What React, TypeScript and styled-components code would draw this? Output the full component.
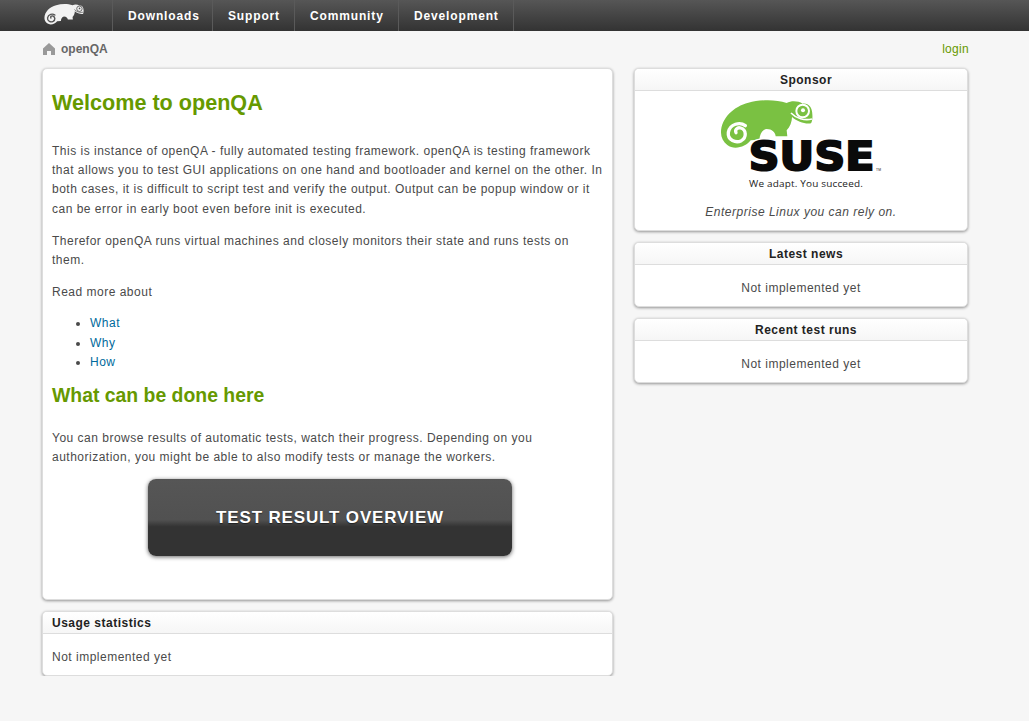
import React from 'react';
import styled, { createGlobalStyle } from 'styled-components';

const GlobalStyle = createGlobalStyle`
  html, body {
    margin: 0;
    padding: 0;
    background: #f6f6f6;
  }
  body {
    font-family: "Liberation Sans", Arial, sans-serif;
    font-size: 12px;
    line-height: 19.2px;
    letter-spacing: 0.5px;
    color: #4a4a4a;
  }
`;

const TopBar = styled.header`
  display: flex;
  height: 31px;
  background: linear-gradient(#565656, #333);
`;

const LogoSlot = styled.div`
  width: 112px;
  box-sizing: border-box;
  padding: 3px 0 0 44px;
`;

const NavItem = styled.a<{ $width: number }>`
  display: flex;
  align-items: center;
  width: ${p => p.$width}px;
  height: 31px;
  box-sizing: border-box;
  padding: 2px 0 0 15px;
  border-left: 1px solid #5a5a5a;
  color: #fff;
  font-weight: bold;
  letter-spacing: 0.85px;
  font-size: 12px;
  &:last-child {
    border-right: 1px solid #5a5a5a;
  }
`;

const Crumbs = styled.div`
  display: flex;
  justify-content: space-between;
  align-items: center;
  height: 37px;
  padding: 0 60px 0 43px;
`;

const CrumbHome = styled.div`
  display: flex;
  align-items: center;
  gap: 6px;
  color: #666;
  font-weight: bold;
  letter-spacing: 0;
`;

const Login = styled.a`
  color: #690;
  letter-spacing: 0.3px;
`;

const Columns = styled.div`
  display: grid;
  grid-template-columns: 571px 334px;
  column-gap: 21px;
  padding: 0 0 0 42px;
  align-items: start;
`;

const Column = styled.div`
  display: flex;
  flex-direction: column;
  gap: 11px;
`;

const Box = styled.section`
  background: #fff;
  border: 1px solid #ddd;
  border-radius: 5px;
  box-shadow: 0 1px 3px rgba(0, 0, 0, 0.4);
  overflow: hidden;
`;

const BoxHeader = styled.h3<{ $left?: boolean }>`
  margin: 0;
  height: 21px;
  line-height: 22px;
  padding: ${p => (p.$left ? '0 9px' : '0 0 0 10px')};
  background: linear-gradient(#fff, #f6f6f6);
  border-bottom: 1px solid #ddd;
  color: #222;
  font-size: 12px;
  font-weight: bold;
  text-align: ${p => (p.$left ? 'left' : 'center')};
`;

const BoxBody = styled.div<{ $left?: boolean }>`
  padding: 14px 9px 8px;
  line-height: 19px;
  text-align: ${p => (p.$left ? 'left' : 'center')};
`;

const MainContent = styled.div`
  padding: 19px 9px 42.75px 9px;
`;

const Title = styled.h1`
  margin: 0 0 24px;
  color: #690;
  font-size: 21.6px;
  line-height: 30px;
  letter-spacing: 0;
`;

const SubTitle = styled.h2`
  margin: 0 0 21px;
  color: #690;
  font-size: 19.4px;
  line-height: 26px;
  letter-spacing: 0;
`;

const Para = styled.p`
  margin: 0 0 13px;
`;

const LinkList = styled.ul`
  margin: -1px 0 10px;
  padding: 0 0 0 38px;
`;

const Link = styled.a`
  color: #006a9c;
`;

const BigButton = styled.a`
  display: flex;
  align-items: center;
  justify-content: center;
  height: 77px;
  margin: -1px 91px 0 96px;
  border-radius: 8px;
  background: linear-gradient(#565656 0, #515151 53%, #333 62%, #333 100%);
  box-shadow: 0 1px 4px rgba(0, 0, 0, 0.6);
  color: #fff;
  font-size: 17px;
  font-weight: bold;
  letter-spacing: 0.85px;
  text-shadow: 0 1px 1px rgba(0, 0, 0, 0.5);
`;

const SponsorBody = styled.div`
  padding: 8px 10px 8px;
  text-align: center;
`;

const SponsorLogo = styled.svg`
  display: block;
  margin: 0 0 12px 75px;
`;

const Slogan = styled.em`
  display: block;
  line-height: 19px;
`;

// zoomed logo coordinates, same outline for the nav and the sponsor box
function ChameleonShape({ fill, detail }: { fill: string; detail: string }) {
  return (
    <>
      <path
        fill={fill}
        d="M33 125 C33 80 72 46 115 35 C150 26 195 24 230 36 C245 28 265 30 278 38 C296 36 307 50 307 70 C308 80 307 90 303 97 C285 100 262 92 246 78 C246 92 240 108 230 118 L232 136 L197 136 C196 124 186 114 170 114 C156 116 150 128 148 146 L122 148 C108 168 72 178 52 162 C40 152 33 140 33 125 Z"
      />
      <path
        fill="none"
        stroke={detail}
        strokeWidth="10"
        strokeLinecap="round"
        d="M106 104 C90 92 60 98 55 124 C52 148 78 157 94 149 C110 140 110 116 92 111 C82 108 74 116 78 125"
      />
      <circle cx="278" cy="60" r="19" fill="none" stroke={detail} strokeWidth="6" />
      <circle cx="279" cy="58" r="6" fill={detail} />
      <path fill="none" stroke={detail} strokeWidth="5" d="M243 66 C258 82 284 90 306 84" />
    </>
  );
}

function SuseLogo() {
  return (
    <SponsorLogo width="162" height="92" viewBox="30 24 486 276">
      <ChameleonShape fill="#7ac142" detail="#fff" />
      <text
        x="116"
        y="237"
        fontFamily="'DejaVu Sans', sans-serif"
        fontWeight="bold"
        fontSize="118"
        textLength="378"
        lengthAdjust="spacingAndGlyphs"
        fill="#fff"
        stroke="#fff"
        strokeWidth="14"
      >
        SUSE
      </text>
      <text
        x="116"
        y="237"
        fontFamily="'DejaVu Sans', sans-serif"
        fontWeight="bold"
        fontSize="118"
        textLength="378"
        lengthAdjust="spacingAndGlyphs"
        fill="#0a0a0a"
        stroke="#0a0a0a"
        strokeWidth="6"
      >
        SUSE
      </text>
      <text x="498" y="240" fontFamily="'Liberation Sans', sans-serif" fontSize="10" fill="#222">
        TM
      </text>
      <text
        x="117"
        y="288"
        fontFamily="'Open Sans', sans-serif"
        fontSize="28"
        textLength="342"
        lengthAdjust="spacingAndGlyphs"
        fill="#222"
      >
        We adapt. You succeed.
      </text>
    </SponsorLogo>
  );
}

export default function App() {
  return (
    <>
      <GlobalStyle />
      <TopBar>
        <LogoSlot>
          <svg width="40" height="22" viewBox="30 20 280 154">
            <ChameleonShape fill="#f2f2f2" detail="#555" />
          </svg>
        </LogoSlot>
        <NavItem $width={100}>Downloads</NavItem>
        <NavItem $width={82}>Support</NavItem>
        <NavItem $width={104}>Community</NavItem>
        <NavItem $width={116}>Development</NavItem>
      </TopBar>
      <Crumbs>
        <CrumbHome>
          <svg width="12" height="12" viewBox="0 0 12 12">
            <path fill="#999" d="M6 0 L12 5.5 L12 12 L8 12 L8 8 L4 8 L4 12 L0 12 L0 5.5 Z" />
          </svg>
          openQA
        </CrumbHome>
        <Login>login</Login>
      </Crumbs>
      <Columns>
        <Column>
          <Box>
            <MainContent>
              <Title>Welcome to openQA</Title>
              <Para>
                This is instance of openQA - fully automated testing framework. openQA is testing framework that allows
                you to test GUI applications on one hand and bootloader and kernel on the other. In both cases, it is
                difficult to script test and verify the output. Output can be popup window or it can be error in early
                boot even before init is executed.
              </Para>
              <Para>Therefor openQA runs virtual machines and closely monitors their state and runs tests on them.</Para>
              <Para>Read more about</Para>
              <LinkList>
                <li><Link>What</Link></li>
                <li><Link>Why</Link></li>
                <li><Link>How</Link></li>
              </LinkList>
              <SubTitle>What can be done here</SubTitle>
              <Para>
                You can browse results of automatic tests, watch their progress. Depending on you authorization, you
                might be able to also modify tests or manage the workers.
              </Para>
              <BigButton>TEST RESULT OVERVIEW</BigButton>
            </MainContent>
          </Box>
          <Box>
            <BoxHeader $left>Usage statistics</BoxHeader>
            <BoxBody $left>Not implemented yet</BoxBody>
          </Box>
        </Column>
        <Column>
          <Box>
            <BoxHeader>Sponsor</BoxHeader>
            <SponsorBody>
              <SuseLogo />
              <Slogan>Enterprise Linux you can rely on.</Slogan>
            </SponsorBody>
          </Box>
          <Box>
            <BoxHeader>Latest news</BoxHeader>
            <BoxBody>Not implemented yet</BoxBody>
          </Box>
          <Box>
            <BoxHeader>Recent test runs</BoxHeader>
            <BoxBody>Not implemented yet</BoxBody>
          </Box>
        </Column>
      </Columns>
    </>
  );
}
